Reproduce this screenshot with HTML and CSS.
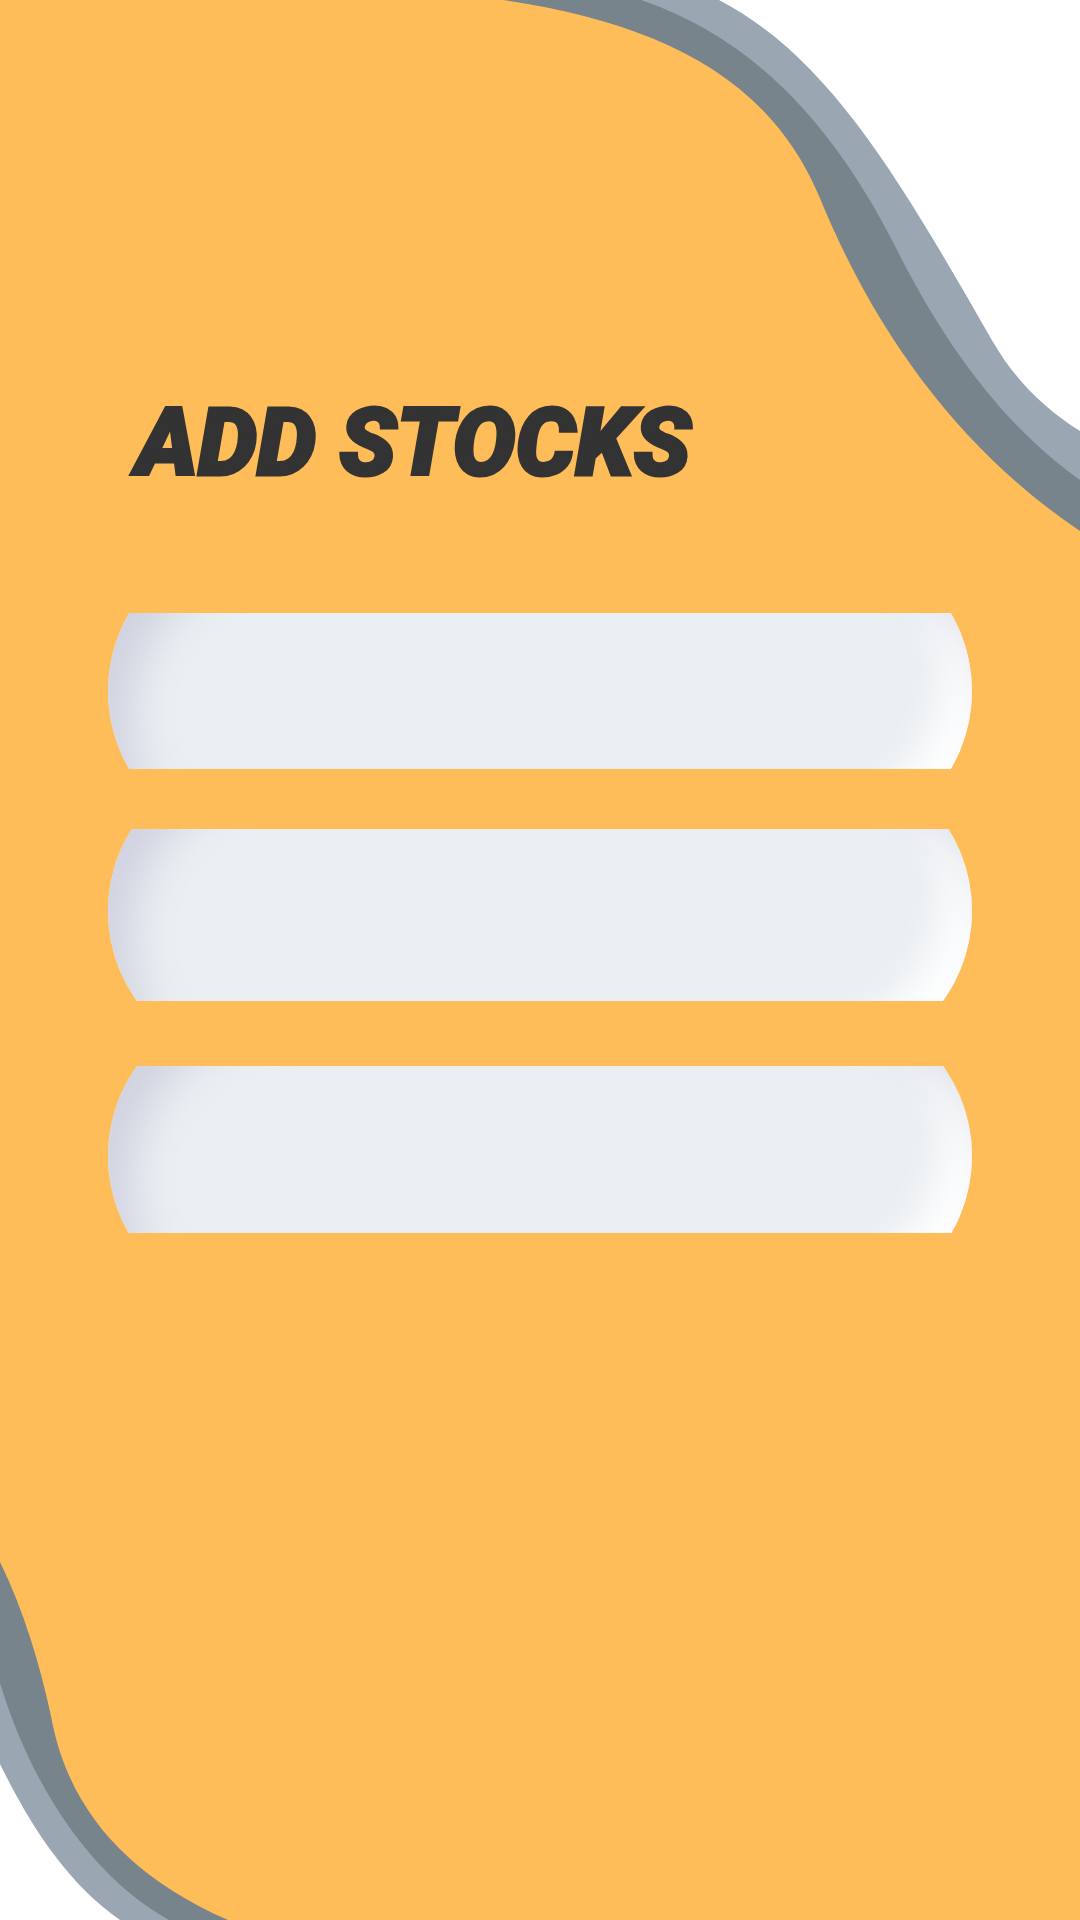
FILE: index.html
```html
<!DOCTYPE html>
<html lang="en">
<head>
  <meta charset="utf-8">
  <meta name="viewport" content="width=device-width, initial-scale=1">
  <title>Add Stocks</title>
  <link rel="stylesheet" href="styles.css">
</head>
<body>
  <main class="page">
    <svg class="wave wave-top" viewBox="0 0 1080 540" aria-hidden="true">
      <path class="wave-dark" d="M503 0C650 22 767 72 819 196C877 338 963 452 1080 531V0Z"/>
      <path class="wave-light" d="M641 0C758 40 836 130 895 246C944 344 1002 424 1080 480V0Z"/>
      <path class="wave-white" d="M719 0C830 58 900 180 993 342C1014 378 1042 407 1080 431V0Z"/>
    </svg>
    <svg class="wave wave-bottom" viewBox="0 1540 1080 380" aria-hidden="true">
      <path class="wave-dark" d="M0 1562C24 1611 40 1665 51 1716C66 1800 118 1872 228 1920H0Z"/>
      <path class="wave-light" d="M0 1683C32 1788 92 1877 169 1920H0Z"/>
      <path class="wave-white" d="M0 1764C33 1831 69 1884 120 1920H0Z"/>
    </svg>

    <form class="form">
      <h1 class="title">ADD STOCKS</h1>
      <div class="field field-name">
        <input class="field-input" type="text" aria-label="Stock name">
      </div>
      <div class="field field-quantity">
        <input class="field-input" type="text" aria-label="Quantity">
      </div>
      <div class="field field-price">
        <input class="field-input" type="text" aria-label="Price">
      </div>
    </form>
  </main>
</body>
</html>
```
FILE: styles.css
```css
* {
  box-sizing: border-box;
}

body {
  margin: 0;
  background: #ffbd59;
  font-family: Roboto, "Liberation Sans", sans-serif;
}

.page {
  position: relative;
  min-height: 100vh;
  padding: 387px 10% 400px;
  background: #ffbd59;
}

/* Corner waves sit behind the form */
.wave {
  position: absolute;
  left: 0;
  display: block;
  width: 100%;
}

.wave-top {
  top: 0;
}

.wave-bottom {
  bottom: 0;
}

.wave-dark {
  fill: #78848c;
}

.wave-light {
  fill: #9aa6b2;
}

.wave-white {
  fill: #fff;
}

.form {
  position: relative;
  display: flex;
  flex-direction: column;
}

.title {
  margin: 0 0 114px;
  padding-left: 28px;
  color: #333;
  font-size: 94px;
  font-style: italic;
  font-weight: 900;
  line-height: 112px;
  -webkit-text-stroke: 3px #333;
}

/* Each field shows a horizontal band of a taller pill */
.field {
  overflow: hidden;
}

.field-input {
  display: block;
  width: 100%;
  height: 308px;
  padding: 0 64px;
  border: 0;
  border-radius: 154px;
  outline: 0;
  background: #ebeff2;
  box-shadow:
    inset 24px 24px 44px #d0d2e0,
    inset -24px -24px 44px #fff;
  color: #333;
  font: inherit;
  font-size: 48px;
}

.field-name {
  height: 156px;
  margin-bottom: 60px;
}

.field-name .field-input {
  margin-top: -76px;
}

.field-quantity {
  height: 172px;
  margin-bottom: 65px;
}

.field-quantity .field-input {
  margin-top: -72px;
}

.field-price {
  height: 167px;
}

.field-price .field-input {
  margin-top: -64px;
}
```
